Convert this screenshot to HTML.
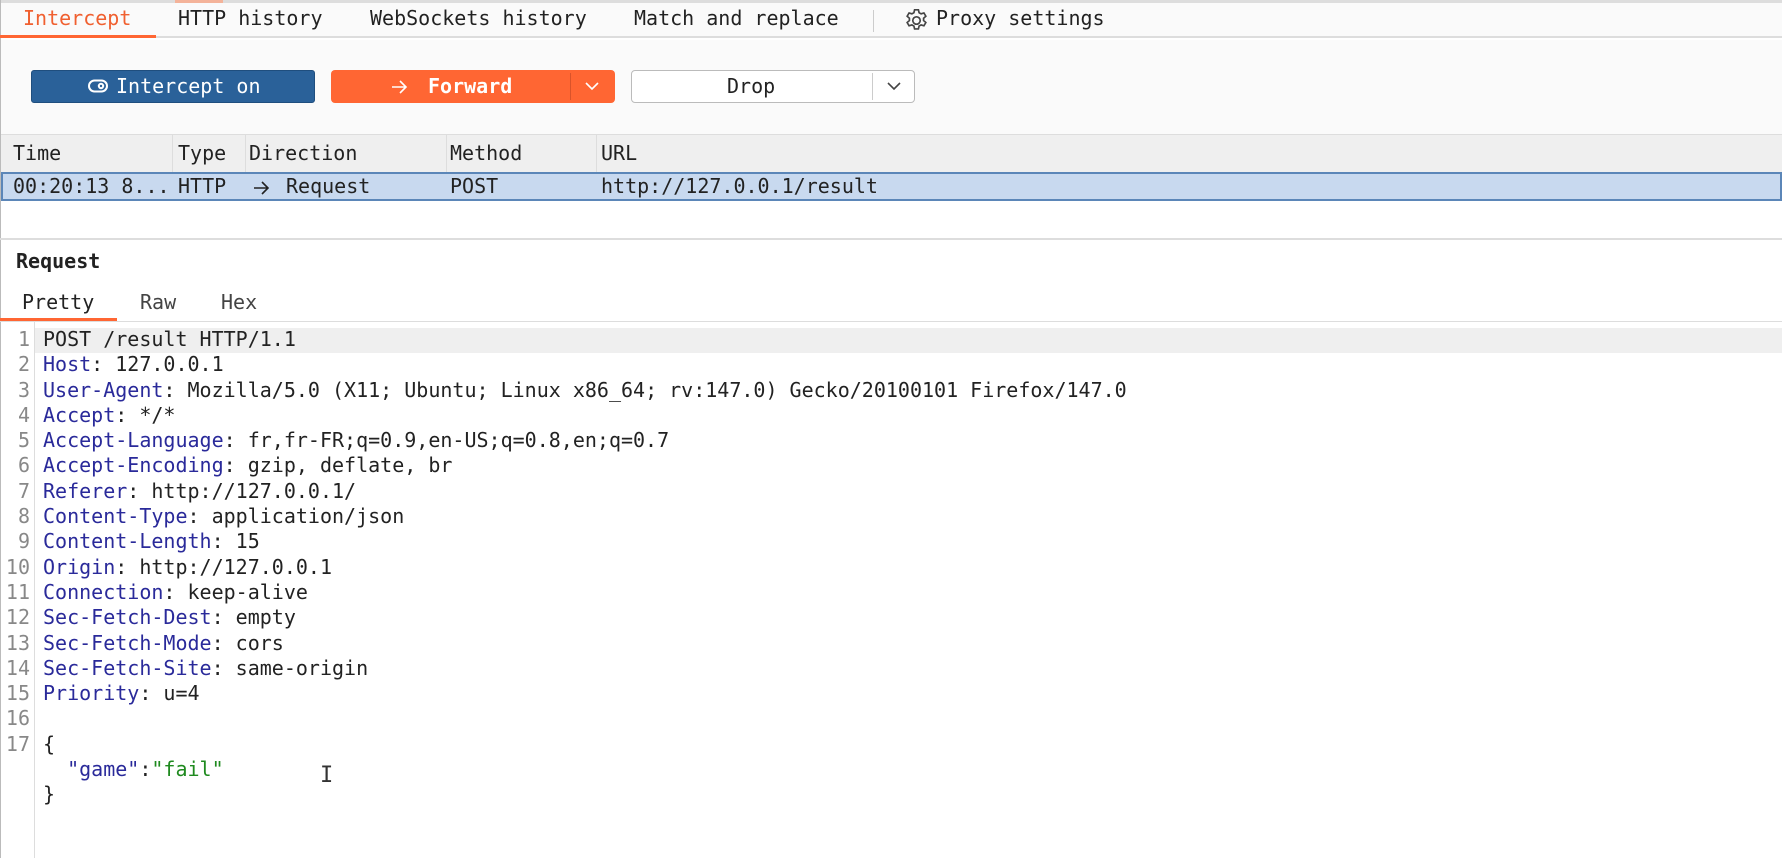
<!DOCTYPE html>
<html><head><meta charset="utf-8"><style>
*{margin:0;padding:0;box-sizing:border-box}
body{width:1782px;height:858px;overflow:hidden;background:#fff;font-family:"DejaVu Sans Mono","Liberation Mono",monospace;font-size:20px;color:#222;position:relative}
.a{position:absolute;white-space:pre}
</style></head><body>
<div class="a" style="left:0;top:0;width:1782px;height:3px;background:#ddd"></div>
<div class="a" style="left:0;top:0;width:1px;height:858px;background:#bbb"></div>
<div class="a" style="left:1px;top:3px;width:1781px;height:35px;background:#fafafa;border-bottom:2px solid #ddd"></div>
<div class="a" style="left:175px;top:0;width:48px;height:3px;background:#f4b39a"></div>
<div class="a" style="left:23px;top:6px;color:#f06030">Intercept</div>
<div class="a" style="left:0;top:35px;width:156px;height:3px;background:#ff6633"></div>
<div class="a" style="left:178px;top:6px">HTTP history</div>
<div class="a" style="left:370px;top:6px">WebSockets history</div>
<div class="a" style="left:634px;top:6px">Match and replace</div>
<div class="a" style="left:873px;top:10px;width:1px;height:22px;background:#ccc"></div>
<svg class="a" style="left:903px;top:7px" width="27" height="27" viewBox="0 0 24 24" fill="none" stroke="#444" stroke-width="1.5"><circle cx="12" cy="12" r="3.3"/><path d="M10.3 2.5h3.4l.6 2.6 1.8 1 2.5-.8 1.7 2.9-2 1.8v2l2 1.8-1.7 2.9-2.5-.8-1.8 1-.6 2.6h-3.4l-.6-2.6-1.8-1-2.5.8-1.7-2.9 2-1.8v-2l-2-1.8 1.7-2.9 2.5.8 1.8-1z"/></svg>
<div class="a" style="left:936px;top:6px">Proxy settings</div>
<div class="a" style="left:1px;top:40px;width:1781px;height:94px;background:#fafafa"></div>
<div class="a" style="left:31px;top:70px;width:284px;height:33px;background:#2a6199;border:1px solid #1f4e7e;border-radius:3px;color:#fff"></div>
<svg class="a" style="left:88px;top:79px" width="20" height="14" viewBox="0 0 20 14" fill="none" stroke="#fff" stroke-width="2"><rect x="1" y="1.5" width="18" height="11" rx="5.5"/><circle cx="13" cy="7" r="2.2"/></svg>
<div class="a" style="left:116px;top:74px;color:#fff">Intercept on</div>
<div class="a" style="left:331px;top:70px;width:284px;height:33px;background:#ff6633;border-radius:4px"></div>
<svg class="a" style="left:390px;top:79px" width="18" height="16" viewBox="0 0 18 16" fill="none" stroke="#fff" stroke-width="1.6"><path d="M2 8h14M10 2l6 6-6 6"/></svg>
<div class="a" style="left:428px;top:74px;color:#fff;font-weight:bold">Forward</div>
<div class="a" style="left:570px;top:73px;width:1px;height:27px;background:#d9532a"></div>
<svg class="a" style="left:584px;top:81px" width="16" height="10" viewBox="0 0 16 10" fill="none" stroke="#fff" stroke-width="1.6"><path d="M2 2l6 6 6-6"/></svg>
<div class="a" style="left:631px;top:70px;width:284px;height:33px;background:#fff;border:1px solid #bbb;border-radius:4px"></div>
<div class="a" style="left:727px;top:74px">Drop</div>
<div class="a" style="left:872px;top:73px;width:1px;height:27px;background:#ccc"></div>
<svg class="a" style="left:886px;top:81px" width="16" height="10" viewBox="0 0 16 10" fill="none" stroke="#444" stroke-width="1.6"><path d="M2 2l6 6 6-6"/></svg>
<div class="a" style="left:1px;top:134px;width:1781px;height:38px;background:#efefef;border-top:1px solid #ddd"></div>
<div class="a" style="left:172px;top:134px;width:1px;height:38px;background:#ddd"></div>
<div class="a" style="left:245px;top:134px;width:1px;height:38px;background:#ddd"></div>
<div class="a" style="left:446px;top:134px;width:1px;height:38px;background:#ddd"></div>
<div class="a" style="left:596px;top:134px;width:1px;height:38px;background:#ddd"></div>
<div class="a" style="left:13px;top:141px">Time</div>
<div class="a" style="left:178px;top:141px">Type</div>
<div class="a" style="left:249px;top:141px">Direction</div>
<div class="a" style="left:450px;top:141px">Method</div>
<div class="a" style="left:601px;top:141px">URL</div>
<div class="a" style="left:1px;top:172px;width:1781px;height:29px;background:#c8d9ef;border:2px solid #5b86b8"></div>
<div class="a" style="left:13px;top:174px">00:20:13 8...</div>
<div class="a" style="left:178px;top:174px">HTTP</div>
<svg class="a" style="left:252px;top:180px" width="18" height="16" viewBox="0 0 18 16" fill="none" stroke="#222" stroke-width="1.6"><path d="M2 8h14M10 2l6 6-6 6"/></svg>
<div class="a" style="left:286px;top:174px">Request</div>
<div class="a" style="left:450px;top:174px">POST</div>
<div class="a" style="left:601px;top:174px">http://127.0.0.1/result</div>
<div class="a" style="left:0;top:238px;width:1782px;height:2px;background:#ddd"></div>
<div class="a" style="left:16px;top:249px;font-weight:bold">Request</div>
<div class="a" style="left:22px;top:290px">Pretty</div>
<div class="a" style="left:140px;top:290px;color:#444">Raw</div>
<div class="a" style="left:221px;top:290px;color:#444">Hex</div>
<div class="a" style="left:0;top:318px;width:117px;height:3px;background:#ff6633"></div>
<div class="a" style="left:0;top:321px;width:1782px;height:1px;background:#ddd"></div>
<div class="a" style="left:34px;top:322px;width:1px;height:536px;background:#ddd"></div>
<div class="a" style="left:35px;top:328px;width:1747px;height:25px;background:#efefef"></div>
<div class="a" style="left:0;top:327px;width:30px;text-align:right;color:#888;line-height:25.3px">1
2
3
4
5
6
7
8
9
10
11
12
13
14
15
16
17</div>
<div class="a" style="left:43px;top:327px;line-height:25.3px"><span>POST /result HTTP/1.1</span>
<b style="font-weight:normal;color:#2a2a9a">Host</b>: 127.0.0.1
<b style="font-weight:normal;color:#2a2a9a">User-Agent</b>: Mozilla/5.0 (X11; Ubuntu; Linux x86_64; rv:147.0) Gecko/20100101 Firefox/147.0
<b style="font-weight:normal;color:#2a2a9a">Accept</b>: */*
<b style="font-weight:normal;color:#2a2a9a">Accept-Language</b>: fr,fr-FR;q=0.9,en-US;q=0.8,en;q=0.7
<b style="font-weight:normal;color:#2a2a9a">Accept-Encoding</b>: gzip, deflate, br
<b style="font-weight:normal;color:#2a2a9a">Referer</b>: http://127.0.0.1/
<b style="font-weight:normal;color:#2a2a9a">Content-Type</b>: application/json
<b style="font-weight:normal;color:#2a2a9a">Content-Length</b>: 15
<b style="font-weight:normal;color:#2a2a9a">Origin</b>: http://127.0.0.1
<b style="font-weight:normal;color:#2a2a9a">Connection</b>: keep-alive
<b style="font-weight:normal;color:#2a2a9a">Sec-Fetch-Dest</b>: empty
<b style="font-weight:normal;color:#2a2a9a">Sec-Fetch-Mode</b>: cors
<b style="font-weight:normal;color:#2a2a9a">Sec-Fetch-Site</b>: same-origin
<b style="font-weight:normal;color:#2a2a9a">Priority</b>: u=4

{
  <b style="font-weight:normal;color:#2a2a9a">"game"</b>:<b style="font-weight:normal;color:#1f8a1f">"fail"</b>
}</div>
<div class="a" style="left:320px;top:763px;font-size:22px;color:#333">I</div>
</body></html>
